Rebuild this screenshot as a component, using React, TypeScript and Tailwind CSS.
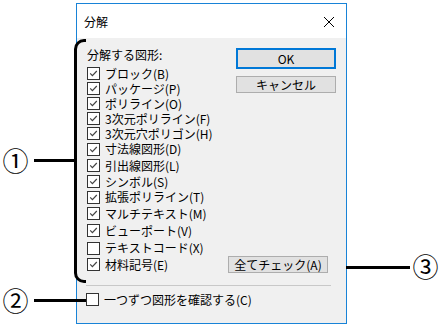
import React from 'react';

const items = [
  { label: 'ブロック(B)', on: true, h: 'h-[15px]' },
  { label: 'パッケージ(P)', on: true, h: 'h-[15px]' },
  { label: 'ポリライン(O)', on: true, h: 'h-[15px]' },
  { label: '3次元ポリライン(F)', on: true, h: 'h-[15px]' },
  { label: '3次元穴ポリゴン(H)', on: true, h: 'h-[15px]' },
  { label: '寸法線図形(D)', on: true, h: 'h-[16px]' },
  { label: '引出線図形(L)', on: true, h: 'h-[17px]' },
  { label: 'シンボル(S)', on: true, h: 'h-[15px]' },
  { label: '拡張ポリライン(T)', on: true, h: 'h-[16px]' },
  { label: 'マルチテキスト(M)', on: true, h: 'h-[17px]' },
  { label: 'ビューポート(V)', on: true, h: 'h-[17px]' },
  { label: 'テキストコード(X)', on: false, h: 'h-[18px]' },
  { label: '材料記号(E)', on: true, h: 'h-[15px]' },
];

function Box({ checked }: { checked: boolean }) {
  return (
    <span className="w-[13px] h-[13px] border border-[#333333] bg-white flex items-center justify-center shrink-0">
      {checked && (
        <svg width="11" height="11" viewBox="0 0 11 11">
          <path d="M2.2 5.4 L4.4 7.6 L8.8 3" fill="none" stroke="#444444" strokeWidth="1.2" />
        </svg>
      )}
    </span>
  );
}

function Btn({ children, className }: { children: React.ReactNode; className: string }) {
  return (
    <div className={`bg-[#e1e1e1] flex items-center justify-center text-[12px] leading-none text-black ${className}`}>
      {children}
    </div>
  );
}

export default function App() {
  return (
    <div
      className="relative w-[443px] h-[330px] bg-white overflow-hidden"
      style={{ fontFamily: '"Noto Sans CJK JP", "Liberation Sans", sans-serif' }}
    >
      {/* dialog */}
      <div className="pt-[3px] pl-[76px]">
        <div className="w-[271px] h-[321px] border border-[#1883d7] bg-[#f0f0f0] flex flex-col">
          <div className="h-[34px] bg-white flex items-center justify-between pl-[7px] pr-[11px] pt-[1px]">
            <span className="text-[12px] leading-none text-black">分解</span>
            <svg width="12" height="12" viewBox="0 0 12 12">
              <path d="M1 1 L11 11 M11 1 L1 11" stroke="#000" strokeWidth="1" />
            </svg>
          </div>

          <div className="flex px-[10px] pt-[9px]">
            <div className="w-[143px] flex flex-col">
              <div className="h-[16px] flex items-center text-[12px] text-black">分解する図形:</div>
              <div className="mt-[3px] flex flex-col">
                {items.map((it) => (
                  <div key={it.label} className={`${it.h} flex items-center gap-[5px]`}>
                    <Box checked={it.on} />
                    <span className="text-[12px] leading-none text-black whitespace-nowrap">{it.label}</span>
                  </div>
                ))}
              </div>
            </div>
            <div className="flex-1 flex flex-col">
              <Btn className="mt-[1px] ml-[8px] w-[100px] h-[21px] border-2 border-[#0078d7]">OK</Btn>
              <Btn className="mt-[7px] ml-[8px] w-[100px] h-[17px] border border-[#adadad]">キャンセル</Btn>
              <Btn className="mt-auto mb-[-1px] w-[100px] h-[17px] border border-[#adadad]">全てチェック(A)</Btn>
            </div>
          </div>

          <div className="ml-[9px] mt-[13px] w-[245px] h-px bg-[#c8c8c8]" />

          <div className="ml-[9px] mt-[6px] h-[15px] flex items-center gap-[5px]">
            <Box checked={false} />
            <span className="text-[12px] leading-none text-black">一つずつ図形を確認する(C)</span>
          </div>
        </div>
      </div>

      {/* annotations */}
      <div className="absolute left-[74px] top-[39px] w-[12px] h-[244px] border-[3px] border-r-0 border-black rounded-l-[10px]" />
      <div className="absolute left-[34px] top-[159px] w-[41px] h-[3px] bg-black" />
      <div className="absolute left-[34px] top-[299px] w-[52px] h-[3px] bg-black" />
      <div className="absolute left-[346px] top-[266px] w-[64px] h-[3px] bg-black" />
      <span className="absolute left-[2px] top-[144px] w-[27px] text-center text-[26px] leading-[32px] text-black">①</span>
      <span className="absolute left-[2px] top-[284px] w-[27px] text-center text-[26px] leading-[32px] text-black">②</span>
      <span className="absolute left-[412px] top-[250px] w-[27px] text-center text-[26px] leading-[32px] text-black">③</span>
    </div>
  );
}
